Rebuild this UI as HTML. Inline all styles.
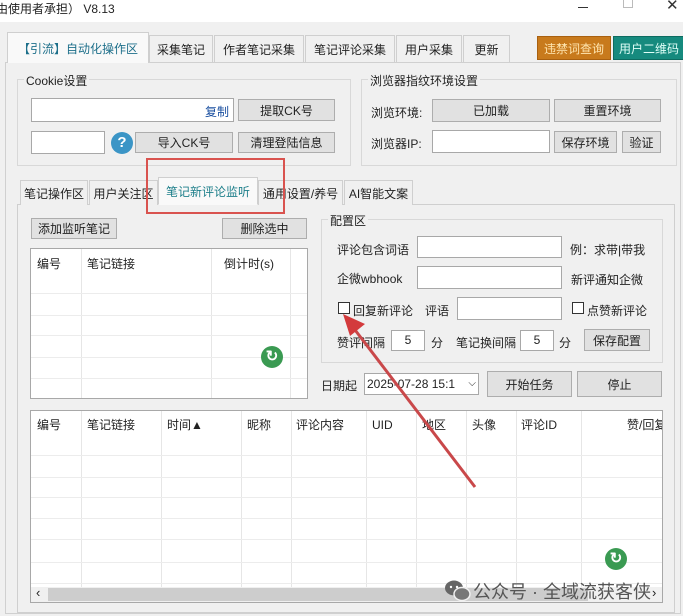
<!DOCTYPE html>
<html><head><meta charset="utf-8"><style>
*{box-sizing:border-box;margin:0;padding:0}
body{width:683px;height:616px;overflow:hidden;background:#f0f0f0;font-family:"Liberation Sans","Noto Sans CJK SC",sans-serif;font-size:12px;color:#222;position:relative}
.a{position:absolute}
.btn{position:absolute;background:#e1e1e1;border:1px solid #adadad;display:flex;align-items:center;justify-content:center;font-size:12px}
.inp{position:absolute;background:#fff;border:1px solid #a8a8a8}
.grp{position:absolute;border:1px solid #d8d8d8}
.tab{position:absolute;border:1px solid #cfcfcf;border-bottom:none;background:#f0f0f0;display:flex;align-items:center;justify-content:center}
.t{position:absolute;white-space:nowrap}
.vl{position:absolute;width:1px;background:#e6e6e6}
.hl{position:absolute;height:1px;background:#ececec}
.cb{position:absolute;width:12px;height:12px;border:1px solid #333;background:#fff}
</style></head><body>
<div class="a" style="left:0;top:0;width:683px;height:22px;background:#fff"></div>
<div class="t" style="left:-4px;top:0px;font-size:12px">由使用者承担） V8.13</div>
<div class="a" style="left:578px;top:7px;width:10px;height:1px;background:#333"></div>
<div class="a" style="left:623px;top:0;width:10px;height:8px;border:1px solid #bbb;border-top:none"></div>
<div class="t" style="left:666px;top:-4px;font-size:15px;color:#333">✕</div>
<div class="a" style="left:5px;top:62px;width:676px;height:552px;border:1px solid #d0d0d0"></div>
<div class="tab" style="left:7px;top:32px;width:142px;height:31px;background:#f9f9f9;color:#1d6f8a">【引流】自动化操作区</div>
<div class="tab" style="left:149px;top:35px;width:64px;height:27px">采集笔记</div>
<div class="tab" style="left:214px;top:35px;width:90px;height:27px">作者笔记采集</div>
<div class="tab" style="left:305px;top:35px;width:90px;height:27px">笔记评论采集</div>
<div class="tab" style="left:396px;top:35px;width:66px;height:27px">用户采集</div>
<div class="tab" style="left:463px;top:35px;width:47px;height:27px">更新</div>
<div class="btn" style="left:537px;top:36px;width:74px;height:24px;background:#c87a1c;color:#ffe6b0;border-color:#a86010">违禁词查询</div>
<div class="btn" style="left:613px;top:36px;width:72px;height:24px;background:#168a7e;color:#e0fff8;border-color:#0d6b60">用户二维码</div>
<div class="grp" style="left:17px;top:79px;width:334px;height:87px"></div>
<div class="t" style="left:24px;top:72px;background:#f0f0f0;padding:0 2px">Cookie设置</div>
<div class="inp" style="left:31px;top:98px;width:203px;height:24px"></div>
<div class="t" style="left:205px;top:103px;color:#1a4fa0">复制</div>
<div class="btn" style="left:238px;top:99px;width:97px;height:22px">提取CK号</div>
<div class="inp" style="left:31px;top:131px;width:74px;height:23px"></div>
<div class="a" style="left:111px;top:132px;width:22px;height:22px;border-radius:50%;background:#3b95c6;color:#fff;font-weight:bold;font-size:15px;text-align:center;line-height:22px">?</div>
<div class="btn" style="left:135px;top:132px;width:98px;height:21px">导入CK号</div>
<div class="btn" style="left:238px;top:132px;width:97px;height:21px">清理登陆信息</div>
<div class="grp" style="left:361px;top:79px;width:316px;height:87px"></div>
<div class="t" style="left:368px;top:72px;background:#f0f0f0;padding:0 2px">浏览器指纹环境设置</div>
<div class="t" style="left:371px;top:104px">浏览环境:</div>
<div class="btn" style="left:432px;top:99px;width:118px;height:23px">已加载</div>
<div class="btn" style="left:554px;top:99px;width:107px;height:23px">重置环境</div>
<div class="t" style="left:371px;top:135px">浏览器IP:</div>
<div class="inp" style="left:432px;top:130px;width:118px;height:23px"></div>
<div class="btn" style="left:554px;top:131px;width:63px;height:22px">保存环境</div>
<div class="btn" style="left:622px;top:131px;width:39px;height:22px">验证</div>
<div class="a" style="left:17px;top:204px;width:658px;height:409px;border:1px solid #cfcfcf;background:#f0f0f0"></div>
<div class="tab" style="left:20px;top:180px;width:68px;height:25px">笔记操作区</div>
<div class="tab" style="left:89px;top:180px;width:69px;height:25px">用户关注区</div>
<div class="tab" style="left:158px;top:177px;width:100px;height:28px;background:#f9f9f9;color:#1d7f8a;border-bottom:1px solid #f9f9f9">笔记新评论监听</div>
<div class="tab" style="left:258px;top:180px;width:85px;height:25px">通用设置/养号</div>
<div class="tab" style="left:344px;top:180px;width:69px;height:25px">AI智能文案</div>
<div class="a" style="left:146px;top:158px;width:139px;height:56px;border:2px solid #d9534f"></div>
<div class="btn" style="left:31px;top:218px;width:86px;height:21px">添加监听笔记</div>
<div class="btn" style="left:222px;top:218px;width:85px;height:21px">删除选中</div>
<div class="a" style="left:30px;top:248px;width:278px;height:151px;background:#fff;border:1px solid #a8a8a8"></div>
<div class="vl" style="left:81px;top:249px;height:149px"></div>
<div class="vl" style="left:211px;top:249px;height:149px"></div>
<div class="vl" style="left:290px;top:249px;height:149px"></div>
<div class="hl" style="left:31px;top:293px;width:276px"></div>
<div class="hl" style="left:31px;top:315px;width:276px"></div>
<div class="hl" style="left:31px;top:335px;width:276px"></div>
<div class="hl" style="left:31px;top:357px;width:276px"></div>
<div class="hl" style="left:31px;top:378px;width:276px"></div>
<div class="t" style="left:37px;top:255px">编号</div>
<div class="t" style="left:87px;top:255px">笔记链接</div>
<div class="t" style="left:224px;top:255px">倒计时(s)</div>
<div class="a" style="left:261px;top:346px;width:22px;height:22px;border-radius:50%;background:#3a9a52;color:#fff;font-size:15px;text-align:center;line-height:22px;font-weight:bold">↻</div>
<div class="grp" style="left:321px;top:219px;width:342px;height:144px"></div>
<div class="t" style="left:328px;top:212px;background:#f0f0f0;padding:0 2px">配置区</div>
<div class="t" style="left:337px;top:241px">评论包含词语</div>
<div class="inp" style="left:417px;top:236px;width:145px;height:22px"></div>
<div class="t" style="left:570px;top:241px">例：求带|带我</div>
<div class="t" style="left:337px;top:270px">企微wbhook</div>
<div class="inp" style="left:417px;top:266px;width:145px;height:23px"></div>
<div class="t" style="left:571px;top:271px">新评通知企微</div>
<div class="cb" style="left:338px;top:302px"></div>
<div class="t" style="left:353px;top:302px">回复新评论</div>
<div class="t" style="left:425px;top:302px">评语</div>
<div class="inp" style="left:457px;top:297px;width:105px;height:23px"></div>
<div class="cb" style="left:572px;top:302px"></div>
<div class="t" style="left:587px;top:302px">点赞新评论</div>
<div class="t" style="left:337px;top:334px">赞评间隔</div>
<div class="inp" style="left:391px;top:330px;width:34px;height:21px;text-align:center;line-height:19px">5</div>
<div class="t" style="left:431px;top:334px">分</div>
<div class="t" style="left:456px;top:334px">笔记换间隔</div>
<div class="inp" style="left:520px;top:330px;width:34px;height:21px;text-align:center;line-height:19px">5</div>
<div class="t" style="left:559px;top:334px">分</div>
<div class="btn" style="left:584px;top:329px;width:66px;height:22px">保存配置</div>
<div class="t" style="left:321px;top:377px">日期起</div>
<div class="inp" style="left:364px;top:373px;width:115px;height:22px;padding-left:2px;line-height:20px;overflow:hidden;white-space:nowrap">2025-07-28 15:1<span style="position:absolute;right:2px;top:0;background:#fff;font-size:10px">⌵</span></div>
<div class="btn" style="left:487px;top:371px;width:85px;height:26px">开始任务</div>
<div class="btn" style="left:577px;top:371px;width:85px;height:26px">停止</div>
<div class="a" style="left:30px;top:410px;width:633px;height:193px;background:#fff;border:1px solid #a8a8a8"></div>
<div class="vl" style="left:81px;top:411px;height:176px"></div>
<div class="vl" style="left:161px;top:411px;height:176px"></div>
<div class="vl" style="left:241px;top:411px;height:176px"></div>
<div class="vl" style="left:291px;top:411px;height:176px"></div>
<div class="vl" style="left:366px;top:411px;height:176px"></div>
<div class="vl" style="left:416px;top:411px;height:176px"></div>
<div class="vl" style="left:466px;top:411px;height:176px"></div>
<div class="vl" style="left:516px;top:411px;height:176px"></div>
<div class="vl" style="left:581px;top:411px;height:176px"></div>
<div class="hl" style="left:31px;top:455px;width:631px"></div>
<div class="hl" style="left:31px;top:477px;width:631px"></div>
<div class="hl" style="left:31px;top:497px;width:631px"></div>
<div class="hl" style="left:31px;top:518px;width:631px"></div>
<div class="hl" style="left:31px;top:539px;width:631px"></div>
<div class="hl" style="left:31px;top:562px;width:631px"></div>
<div class="hl" style="left:31px;top:583px;width:631px"></div>
<div class="t" style="left:37px;top:416px">编号</div>
<div class="t" style="left:87px;top:416px">笔记链接</div>
<div class="t" style="left:167px;top:416px">时间▲</div>
<div class="t" style="left:247px;top:416px">昵称</div>
<div class="t" style="left:296px;top:416px">评论内容</div>
<div class="t" style="left:372px;top:418px">UID</div>
<div class="t" style="left:422px;top:416px">地区</div>
<div class="t" style="left:472px;top:416px">头像</div>
<div class="t" style="left:521px;top:416px">评论ID</div>
<div class="t" style="left:627px;top:416px;width:35px;overflow:hidden">赞/回复</div>
<div class="a" style="left:31px;top:587px;width:631px;height:15px;background:#f0f0f0"></div>
<div class="a" style="left:48px;top:588px;width:540px;height:13px;background:#cdcdcd"></div>
<div class="t" style="left:36px;top:585px;font-size:13px">‹</div>
<div class="t" style="left:652px;top:585px;font-size:13px">›</div>
<div class="a" style="left:605px;top:548px;width:22px;height:22px;border-radius:50%;background:#3a9a52;color:#fff;font-size:15px;text-align:center;line-height:22px;font-weight:bold">↻</div>
<svg class="a" style="left:444px;top:579px" width="28" height="24" viewBox="0 0 28 24"><ellipse cx="10" cy="9" rx="9" ry="7.5" fill="#666"/><ellipse cx="18" cy="15" rx="8" ry="6.5" fill="#777" stroke="#f0f0f0" stroke-width="1.5"/><circle cx="7" cy="8" r="1.2" fill="#fff"/><circle cx="13" cy="8" r="1.2" fill="#fff"/></svg>
<div class="t" style="left:473px;top:578px;font-size:18px;color:#555">公众号 · 全域流获客侠</div>
<svg class="a" style="left:0;top:0" width="683" height="616"><line x1="475" y1="487" x2="352" y2="326" stroke="#c9484a" stroke-width="3"/><polygon points="343,314 365,324 350,336" fill="#d33a3c"/></svg>
</body></html>
